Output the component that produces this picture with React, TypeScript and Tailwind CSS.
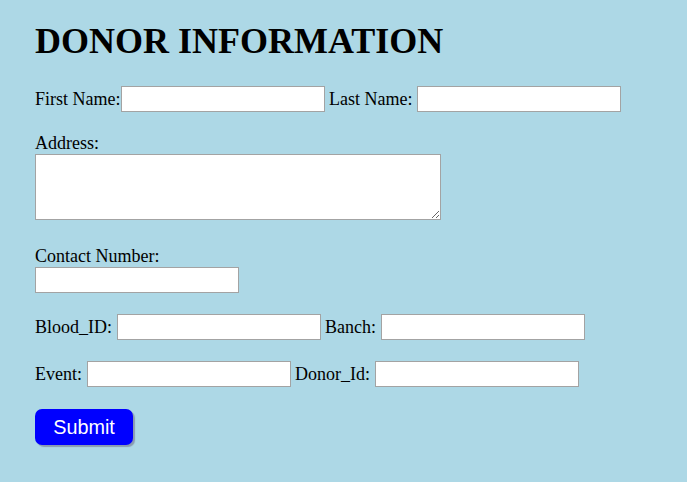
import React from 'react';

const inputCls =
  'h-[26px] w-[204px] border border-[#a3a3a3] bg-white px-[2px] outline-none';

export default function App() {
  return (
    <div className="min-h-screen bg-[#add8e6] pl-[35px] pt-[21px] text-[18px] text-black [font-family:'Liberation_Serif','Times_New_Roman',serif]">
      <h1 className="text-[36px] font-bold leading-[40px]">DONOR INFORMATION</h1>

      <form onSubmit={e => e.preventDefault()}>
        <div className="mt-[25px] flex h-[26px] items-center leading-[20px]">
          <span>First Name:</span>
          <input type="text" className={inputCls} />
          <span className="ml-[4.5px]">Last Name:</span>
          <input type="text" className={`${inputCls} ml-[4.5px]`} />
        </div>

        <div className="mt-[21px] leading-[20px]">Address:</div>
        <textarea className="mt-[1px] block h-[66px] w-[406px] border border-[#a3a3a3] bg-white outline-none" />

        <div className="mt-[26px] leading-[20px]">Contact Number:</div>
        <input type="text" className={`${inputCls} mt-[1px] block`} />

        <div className="mt-[21px] flex h-[26px] items-center leading-[20px]">
          <span>Blood_ID:</span>
          <input type="text" className={`${inputCls} ml-[4.5px]`} />
          <span className="ml-[4.5px]">Banch:</span>
          <input type="text" className={`${inputCls} ml-[4.5px]`} />
        </div>

        <div className="mt-[21px] flex h-[26px] items-center leading-[20px]">
          <span>Event:</span>
          <input type="text" className={`${inputCls} ml-[4.5px]`} />
          <span className="ml-[4.5px]">Donor_Id:</span>
          <input type="text" className={`${inputCls} ml-[4.5px]`} />
        </div>

        <button
          type="submit"
          className="mt-[22px] h-[36px] w-[98px] rounded-[7px] bg-[#0000ff] text-[19.8px] leading-[23px] text-white shadow-[2px_2px_1px_#8a9bb0] [font-family:'Liberation_Sans',Arial,sans-serif]"
        >
          Submit
        </button>
      </form>
    </div>
  );
}
